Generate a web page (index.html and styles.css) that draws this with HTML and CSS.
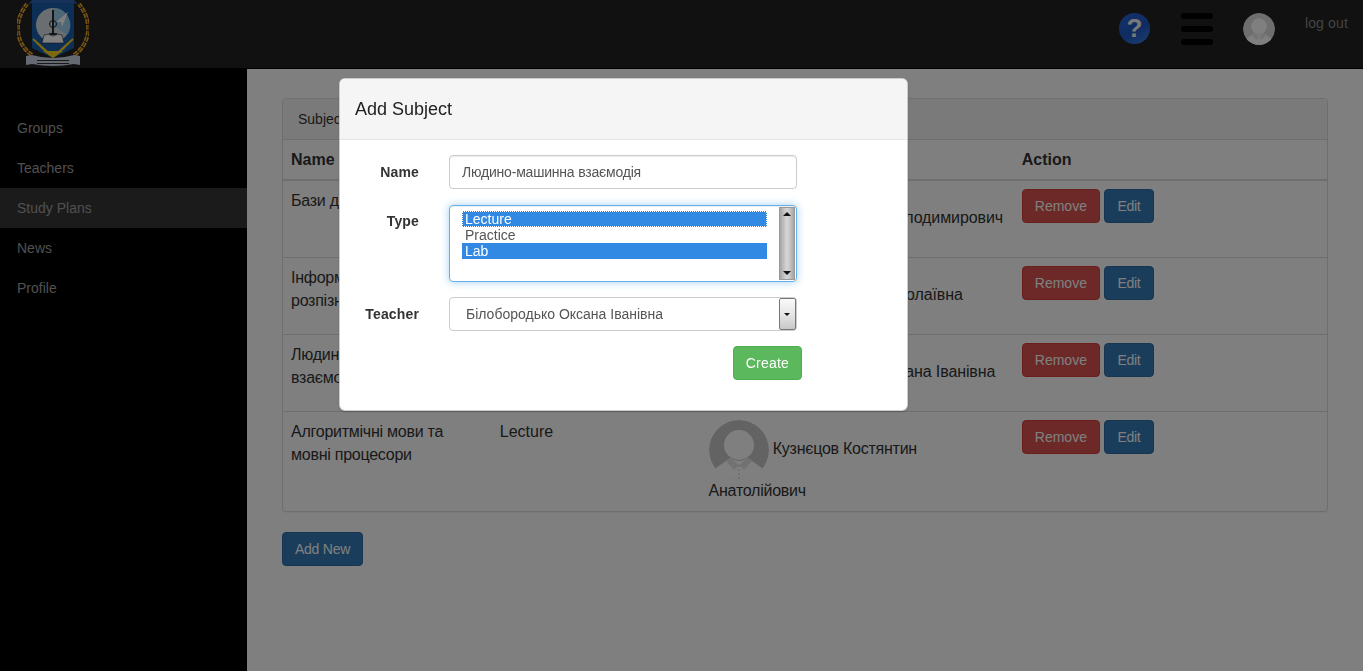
FILE: index.html
```html
<!DOCTYPE html>
<html lang="uk">
<head>
<meta charset="utf-8">
<title>Subjects</title>
<link rel="stylesheet" href="styles.css">
</head>
<body>
<svg class="defs" width="0" height="0" aria-hidden="true">
  <defs>
    <clipPath id="av-clip"><circle cx="30" cy="30" r="30"/></clipPath>
    <symbol id="avatar" viewBox="0 0 60 60">
      <g clip-path="url(#av-clip)">
        <circle class="av-bg" cx="30" cy="30" r="30"/>
        <circle class="av-fg" cx="30" cy="25" r="15"/>
        <path class="av-fg" d="M0 53 L21 38 Q30 44 39 38 L60 53 L60 60 L0 60 Z"/>
        <path class="av-collar" d="M21 38 L30 45 L25 50 L17 41 Z M39 38 L30 45 L35 50 L43 41 Z"/>
        <path class="av-line" d="M30 45 V60"/>
      </g>
    </symbol>
  </defs>
</svg>

<header class="topbar">
  <svg class="logo" viewBox="0 0 72 67" width="72" height="67" aria-label="Logo">
    <path class="wreath" d="M15 55 C1 46 -6 24 10 4"/>
    <path class="wreath" d="M57 55 C71 46 78 24 62 4"/>
    <path class="wreath-stem" d="M15 55 C1 46 -6 24 10 4 M57 55 C71 46 78 24 62 4"/>
    <path class="shield" d="M15 0 H57 V48 L36 58 L15 48 Z"/>
    <path class="shield-edge" d="M11 5 L15 0 H57 L61 5 L57 3 H15 Z"/>
    <circle class="disc" cx="36" cy="25" r="17"/>
    <path class="disc-blue" d="M36 8 A17 17 0 0 1 50 35 L36 25 Z"/>
    <path class="plane" d="M51 12 L39 22 L44 22 L45 27 Z"/>
    <path class="lamp" d="M36 10 V34 M32 34 H40"/>
    <circle class="lamp-ring" cx="36" cy="24" r="3.5"/>
    <path class="book" d="M36 36 Q31 33 27 35 L25 43 H47 L45 35 Q41 33 36 36 Z"/>
    <path class="rays" d="M36 57 L16 39 M36 57 L20 43 M36 57 L24 47 M36 57 L56 39 M36 57 L52 43 M36 57 L48 47"/>
    <path class="sun" d="M26 51 H46 L36 58 Z"/>
    <path class="ribbon" d="M9 56 L15 55 Q36 61 57 55 L63 56 V65 L57 64 Q36 68 15 64 L9 65 Z"/>
    <path class="ribbon-line" d="M20 60.500 H52 M20 63.500 H52"/>
  </svg>
  <div class="top-actions">
    <span class="help">?</span>
    <span class="burger"><i></i><i></i><i></i></span>
    <svg class="top-avatar" width="32" height="32"><use href="#avatar"/></svg>
    <a class="logout">log out</a>
  </div>
</header>

<div class="layout">
  <nav class="sidebar">
    <a class="nav-item">Groups</a>
    <a class="nav-item">Teachers</a>
    <a class="nav-item active">Study Plans</a>
    <a class="nav-item">News</a>
    <a class="nav-item">Profile</a>
  </nav>
  <main class="content">
    <section class="panel">
      <div class="panel-heading">Subjects</div>
      <table class="table">
        <colgroup><col class="c-20"><col class="c-20"><col class="c-30"><col class="c-30"></colgroup>
        <thead>
          <tr><th>Name</th><th>Type</th><th>Teacher</th><th>Action</th></tr>
        </thead>
        <tbody>
          <tr>
            <td class="text-cell tight">Бази даних</td>
            <td class="text-cell">Lecture</td>
            <td class="tight-less one-line"><svg class="avatar" width="60" height="60"><use href="#avatar"/></svg> Петренчук Ігор Володимирович</td>
            <td><button class="btn danger">Remove</button> <button class="btn primary">Edit</button></td>
          </tr>
          <tr>
            <td class="text-cell tight">Інформаційні системи розпізнавання</td>
            <td class="text-cell">Lecture</td>
            <td class="tight-less one-line"><svg class="avatar" width="60" height="60"><use href="#avatar"/></svg> Коваль Ганна Миколаївна</td>
            <td><button class="btn danger">Remove</button> <button class="btn primary">Edit</button></td>
          </tr>
          <tr>
            <td class="text-cell tight">Людино-машинна взаємодія</td>
            <td class="text-cell">Lecture</td>
            <td class="tight-less one-line"><svg class="avatar" width="60" height="60"><use href="#avatar"/></svg> Білобородько Оксана Іванівна</td>
            <td><button class="btn danger">Remove</button> <button class="btn primary">Edit</button></td>
          </tr>
          <tr>
            <td class="text-cell tight">Алгоритмічні мови та мовні процесори</td>
            <td class="text-cell">Lecture</td>
            <td class="tight"><svg class="avatar" width="60" height="60"><use href="#avatar"/></svg> Кузнєцов Костянтин Анатолійович</td>
            <td><button class="btn danger">Remove</button> <button class="btn primary">Edit</button></td>
          </tr>
        </tbody>
      </table>
    </section>
    <button class="btn primary">Add New</button>
  </main>
</div>

<div class="backdrop"></div>

<div class="modal">
  <div class="modal-header">Add Subject</div>
  <form class="modal-body">
    <label class="form-label label-low">Name</label>
    <input class="control" type="text" value="Людино-машинна взаємодія">
    <label class="form-label">Type</label>
    <div class="listbox" role="listbox">
      <div class="options">
        <div class="option selected focused">Lecture</div>
        <div class="option">Practice</div>
        <div class="option selected">Lab</div>
      </div>
      <div class="scrollbar"><span class="arrow up"></span><span class="arrow down"></span></div>
    </div>
    <label class="form-label label-low">Teacher</label>
    <div class="dropdown">
      <span class="drop-text">Білобородько Оксана Іванівна</span>
      <span class="drop-btn"><span class="arrow down small"></span></span>
    </div>
    <div class="form-actions"><button class="btn success" type="button">Create</button></div>
  </form>
</div>
</body>
</html>
```
FILE: styles.css
```css
* { box-sizing: border-box; }
html, body { margin: 0; height: 100%; }
body {
  font-family: "Liberation Sans", Arial, sans-serif;
  font-size: 14px;
  line-height: 1.42857;
  color: #333;
  background: #fff;
  overflow: hidden;
}
.defs { position: absolute; }

/* avatar parts */
.av-bg { fill: var(--av-bg, #c6c6c6); }
.av-fg { fill: var(--av-fg, #fff); }
.av-collar { fill: var(--av-collar, #e4e4e4); }
.av-line { fill: none; stroke: var(--av-collar, #c6c6c6); stroke-width: 1; stroke-dasharray: 2 2; }

/* top bar */
.topbar {
  height: 69px;
  background: #222;
  border-bottom: 1px solid #000;
  display: flex;
  justify-content: space-between;
  padding-left: 17px;
}
.logo { display: block; overflow: hidden; }
.wreath { fill: none; stroke: #f0a828; stroke-width: 4; stroke-dasharray: 5 1; }
.wreath-stem { fill: none; stroke: #222; stroke-width: .8; }
.shield { fill: #1a5eac; }
.shield-edge { fill: #2f62b0; }
.disc { fill: #d6dde2; }
.disc-blue { fill: #9fd0ee; }
.plane { fill: #fff; }
.lamp { fill: none; stroke: #000; stroke-width: 1.6; }
.lamp-ring { fill: none; stroke: #111; stroke-width: .9; }
.book { fill: #fff; stroke: #222; stroke-width: .6; }
.rays { fill: none; stroke: #ffd21f; stroke-width: 1.8; }
.sun { fill: #ffd21f; }
.ribbon { fill: #c8d2e4; }
.ribbon-line { fill: none; stroke: #333; stroke-width: 1; }

.top-actions {
  display: flex;
  align-items: flex-start;
  padding-top: 13px;
  padding-right: 15px;
}
.help {
  width: 31px;
  height: 31px;
  border-radius: 50%;
  background: linear-gradient(150deg, #2a66d6 0%, #1f58c4 55%, #3c7ee0 100%);
  color: #f2f2f2;
  font-size: 26px;
  font-weight: bold;
  line-height: 31px;
  text-align: center;
}
.burger {
  margin-left: 31px;
  width: 32px;
  display: flex;
  flex-direction: column;
  gap: 7px;
}
.burger i {
  display: block;
  height: 6px;
  border-radius: 3px;
  background: #000;
}
.top-avatar {
  display: block;
  margin-left: 30px;
  --av-bg: #dcdcdc;
  --av-fg: #fff;
  --av-collar: #e8e8e8;
}
.logout {
  margin-left: 30px;
  color: #888;
  line-height: 20px;
  letter-spacing: .15px;
}

/* layout */
.layout {
  display: flex;
  height: calc(100vh - 69px);
}
.sidebar {
  width: 247px;
  flex: none;
  background: #000;
  padding-top: 40px;
  margin-top: -1px;
}
.nav-item {
  display: block;
  height: 40px;
  padding: 11px 17px 9px;
  color: #a0a0a0;
}
.nav-item.active { background: #363636; }
.content {
  flex: 1;
  padding: 29px 35px 0;
}

/* panel */
.panel {
  border: 1px solid #ddd;
  border-radius: 4px;
  margin-bottom: 20px;
  background: #fff;
  box-shadow: 0 1px 1px rgba(0, 0, 0, .05);
}
.panel-heading {
  padding: 11px 15px 9px;
  background: #f5f5f5;
  border-bottom: 1px solid #ddd;
  border-radius: 3px 3px 0 0;
}
.table {
  width: 100%;
  border-collapse: collapse;
  table-layout: fixed;
  font-size: 16px;
}
.c-20 { width: 20%; }
.c-30 { width: 30%; }
.table th {
  padding: 9px 8px 7px;
  text-align: left;
  vertical-align: bottom;
  border-bottom: 2px solid #ddd;
}
.table td {
  padding: 8px;
  vertical-align: top;
  border-top: 1px solid #ddd;
}
.table td.text-cell { padding: 9px 8px 7px; }
.table thead + tbody tr:first-child td { border-top: 0; }
.tight { letter-spacing: -.25px; }
.tight-less { letter-spacing: -.1px; }
.one-line { white-space: nowrap; }
.avatar { vertical-align: middle; }

/* buttons */
.btn {
  display: inline-block;
  height: 34px;
  padding: 6px 12px;
  font: inherit;
  font-size: 14px;
  line-height: 20px;
  color: #fff;
  border: 1px solid transparent;
  border-radius: 4px;
  vertical-align: middle;
}
.danger { background: #d9534f; border-color: #d43f3a; }
.primary { background: #337ab7; border-color: #2e6da4; letter-spacing: -.25px; }
.success { background: #5cb85c; border-color: #4cae4c; letter-spacing: .2px; }

/* modal overlay */
.backdrop {
  position: fixed;
  inset: 0;
  background: rgba(0, 0, 0, .5);
}
.modal {
  position: fixed;
  left: 339px;
  top: 78px;
  width: 569px;
  height: 333px;
  background: #fff;
  border: 1px solid rgba(0, 0, 0, .2);
  border-radius: 6px;
  box-shadow: 0 1px 2px rgba(0, 0, 0, .2);
}
.modal-header {
  height: 61px;
  padding: 15px;
  background: #f5f5f5;
  border-bottom: 1px solid #e5e5e5;
  border-radius: 5px 5px 0 0;
  font-size: 18px;
  line-height: 30px;
  color: #222;
}
.modal-body {
  display: grid;
  grid-template-columns: 64px 348px;
  column-gap: 30px;
  row-gap: 16px;
  width: 477px;
  padding: 15px;
}
.form-label {
  font-weight: bold;
  text-align: right;
  padding-top: 7px;
  white-space: nowrap;
  justify-self: end;
  letter-spacing: .15px;
}
.form-label.label-low { padding-top: 8px; }
.control {
  width: 100%;
  height: 34px;
  padding: 6px 12px;
  font: inherit;
  color: #555;
  letter-spacing: -.2px;
  border: 1px solid #ccc;
  border-radius: 4px;
  box-shadow: inset 0 1px 1px rgba(0, 0, 0, .075);
}
.listbox {
  height: 77px;
  margin-bottom: -1px;
  display: flex;
  justify-content: space-between;
  padding: 1px 1px 1px 0;
  border: 1px solid #66afe9;
  border-radius: 4px;
  box-shadow: inset 0 1px 1px rgba(0, 0, 0, .075), 0 0 8px rgba(102, 175, 233, .6);
}
.options {
  width: 305px;
  margin: 4px 0 0 12px;
  color: #555;
  font-size: 14px;
  line-height: 16px;
}
.option { height: 16px; padding-left: 3px; }
.option.selected { background: #3289e3; color: #fff; }
.option.focused { outline: 1px dotted #fff; outline-offset: -1px; }
.scrollbar {
  position: relative;
  width: 16px;
  height: 73px;
  border: 1px solid #999;
  background: linear-gradient(90deg, #a4a4a4 0%, #d4d4d4 45%, #d0d0d0 60%, #a4a4a4 100%);
}
.arrow {
  position: absolute;
  left: 3px;
  width: 0;
  height: 0;
  border-left: 4px solid transparent;
  border-right: 4px solid transparent;
}
.arrow.up { top: 4px; border-bottom: 4px solid #111; }
.arrow.down { bottom: 4px; border-top: 4px solid #111; }
.dropdown {
  height: 34px;
  display: flex;
  align-items: center;
  justify-content: space-between;
  padding-left: 16px;
  border: 1px solid #ccc;
  border-radius: 4px;
  color: #555;
}
.drop-text { padding-top: 2px; }
.drop-btn {
  position: relative;
  width: 17px;
  height: 32px;
  border: 1px solid #777;
  border-radius: 2px;
  background: linear-gradient(180deg, #fafafa 0%, #e6e6e6 50%, #c8c8c8 100%);
}
.arrow.small {
  left: 4px;
  bottom: 13px;
  border-left-width: 3px;
  border-right-width: 3px;
  border-top-width: 3px;
}
.form-actions {
  grid-column: 1 / -1;
  display: flex;
  justify-content: flex-end;
  margin-top: -1px;
  margin-right: -5px;
}
```
